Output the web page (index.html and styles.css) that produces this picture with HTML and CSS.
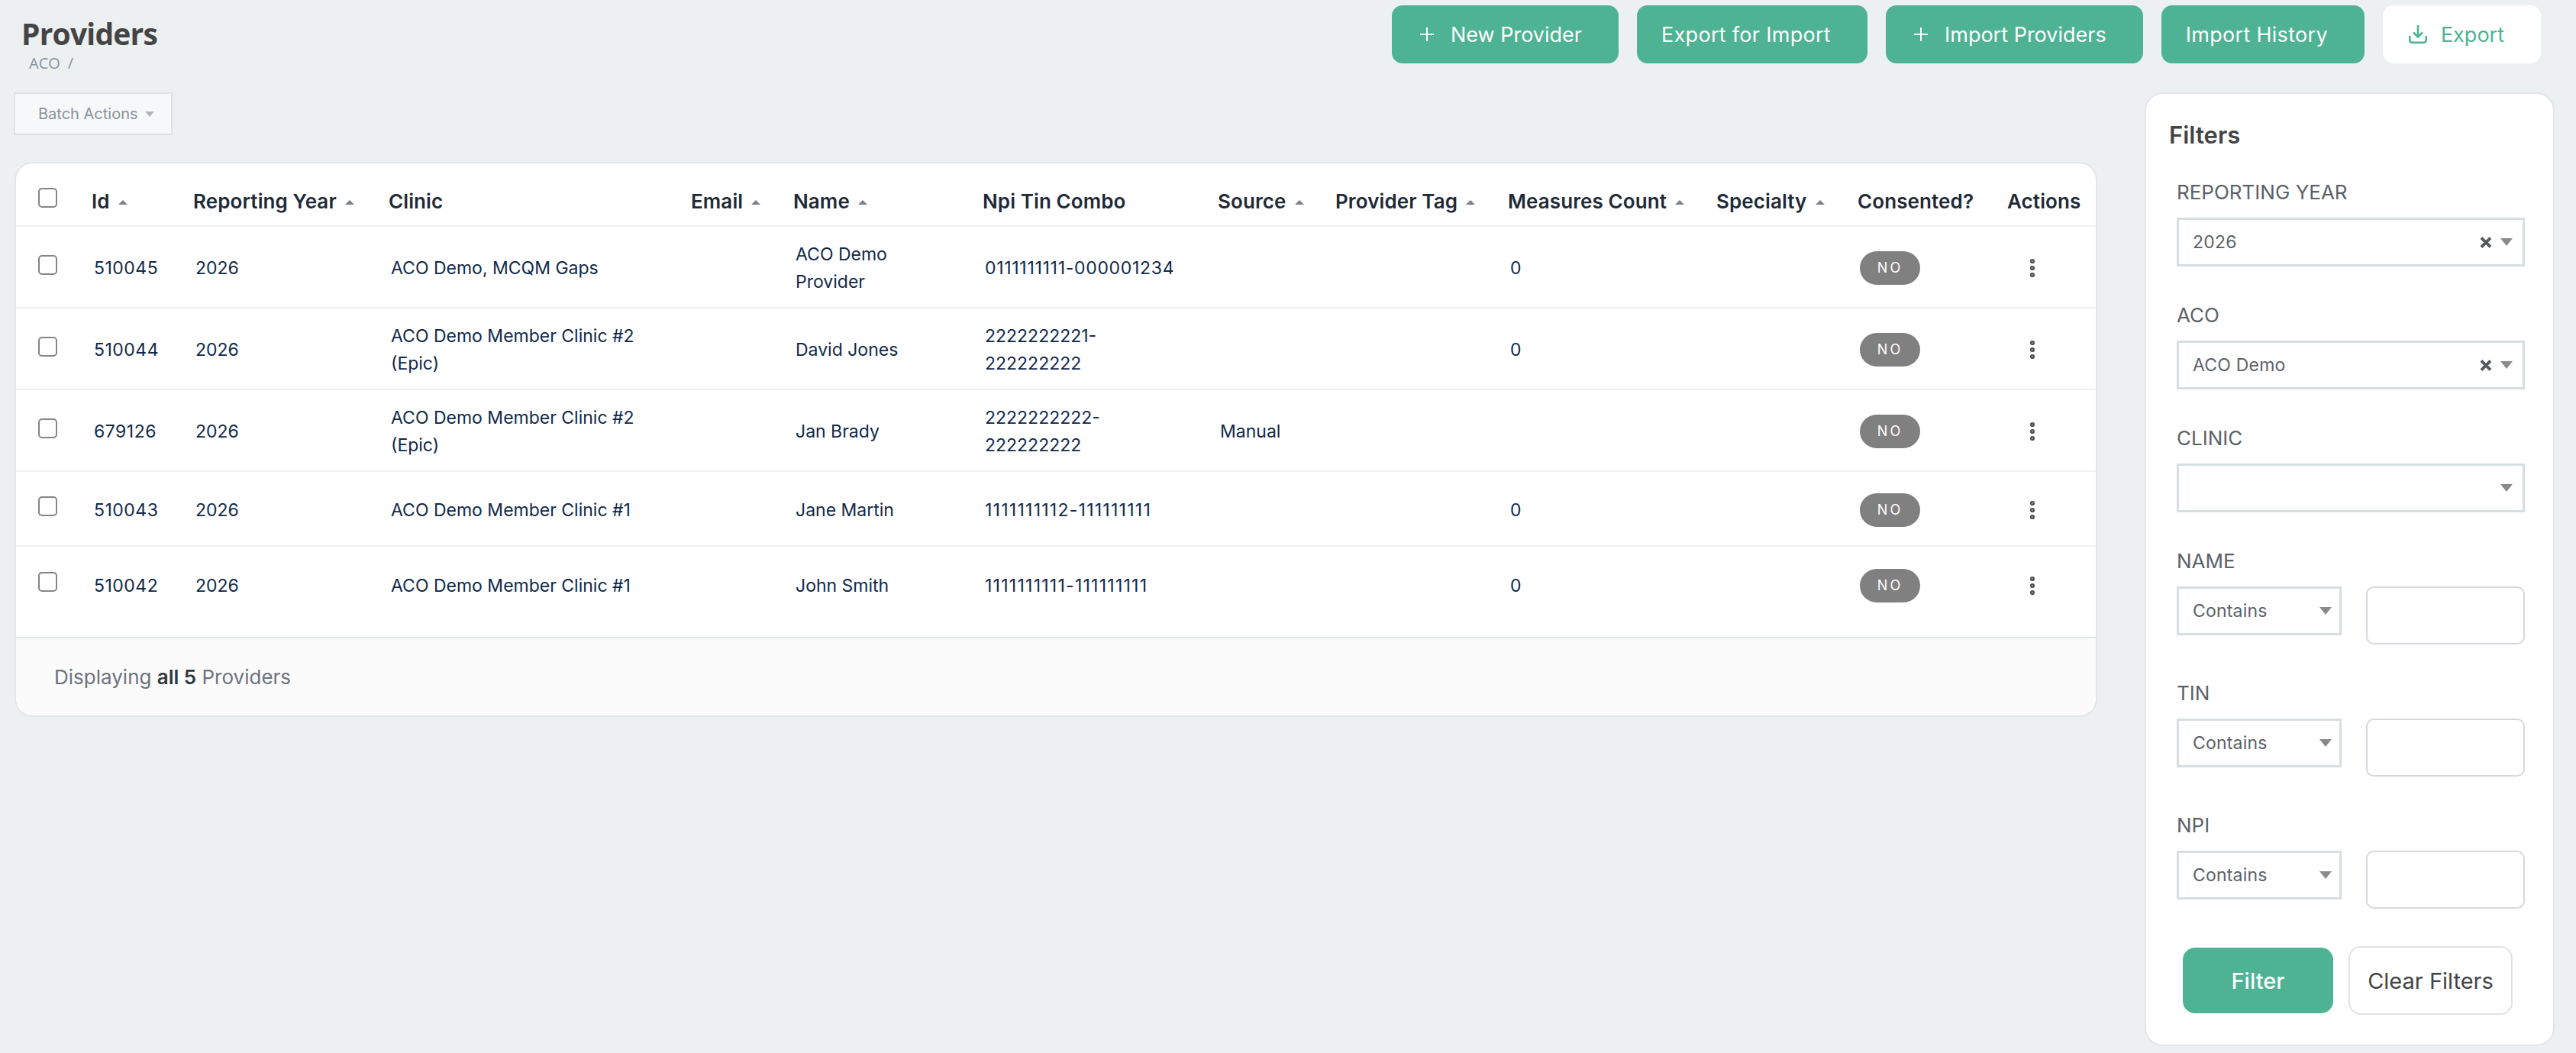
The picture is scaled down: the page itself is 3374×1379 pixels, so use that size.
FILE: index.html
```html
<!DOCTYPE html>
<html lang="en">
<head>
  <meta charset="UTF-8" />
  <title>Providers</title>
  <link rel="stylesheet" href="styles.css">
</head>
<body>

  <div class="topbar">
    <div class="page-title">
      <h1>Providers</h1>
      <div class="breadcrumb"><span>ACO</span><span class="slash">/</span></div>
    </div>
    <div class="top-actions">
      <a class="btn btn-green" href="#">
        <svg class="btn-icon" width="18" height="18" viewBox="0 0 18 18"><path d="M9 0v18M0 9h18" fill="none" stroke="currentColor" stroke-width="2"/></svg>
        New Provider
      </a>
      <a class="btn btn-green btn-plain" href="#">Export for Import</a>
      <a class="btn btn-green" href="#">
        <svg class="btn-icon" width="18" height="18" viewBox="0 0 18 18"><path d="M9 0v18M0 9h18" fill="none" stroke="currentColor" stroke-width="2"/></svg>
        Import Providers
      </a>
      <a class="btn btn-green btn-plain" href="#">Import History</a>
      <a class="btn btn-white" href="#">
        <svg class="btn-icon export-icon" width="24" height="24" viewBox="0 0 24 24" fill="none" stroke="currentColor" stroke-width="2.6"><path d="M12 0v15M6 9.5l6 6 6-6"/><path d="M1.3 14v5.7a3 3 0 0 0 3 3h15.4a3 3 0 0 0 3-3V14"/></svg>
        Export
      </a>
    </div>
  </div>

  <div class="content">
    <div class="main-col">
      <button class="batch-btn">Batch Actions<span class="batch-caret"></span></button>

      <div class="table-card">
        <table class="providers">
          <colgroup>
            <col class="c-check"><col class="c-id"><col class="c-year"><col class="c-clinic"><col class="c-email"><col class="c-name"><col class="c-npi"><col class="c-source"><col class="c-tag"><col class="c-measures"><col class="c-specialty"><col class="c-consent"><col class="c-actions">
          </colgroup>
          <thead>
            <tr>
              <th class="check"><span class="checkbox"></span></th>
              <th class="sort">Id</th>
              <th class="sort">Reporting Year</th>
              <th>Clinic</th>
              <th class="sort">Email</th>
              <th class="sort">Name</th>
              <th>Npi Tin Combo</th>
              <th class="sort">Source</th>
              <th class="sort">Provider Tag</th>
              <th class="sort">Measures Count</th>
              <th class="sort">Specialty</th>
              <th>Consented?</th>
              <th>Actions</th>
            </tr>
          </thead>
          <tbody>
            <tr class="tall">
              <td class="check"><span class="checkbox"></span></td>
              <td class="id">510045</td>
              <td>2026</td>
              <td>ACO Demo, MCQM Gaps</td>
              <td></td>
              <td>ACO Demo<br>Provider</td>
              <td class="some-ones">0111111111-000001234</td>
              <td></td>
              <td></td>
              <td>0</td>
              <td></td>
              <td><span class="badge">NO</span></td>
              <td class="more"><svg width="8" height="26" viewBox="0 0 8 26"><circle cx="4" cy="4" r="2.2"/><circle cx="4" cy="13" r="2.2"/><circle cx="4" cy="22" r="2.2"/></svg></td>
            </tr>
            <tr class="tall">
              <td class="check"><span class="checkbox"></span></td>
              <td class="id">510044</td>
              <td>2026</td>
              <td>ACO Demo Member Clinic #2<br>(Epic)</td>
              <td></td>
              <td>David Jones</td>
              <td>2222222221-<br>222222222</td>
              <td></td>
              <td></td>
              <td>0</td>
              <td></td>
              <td><span class="badge">NO</span></td>
              <td class="more"><svg width="8" height="26" viewBox="0 0 8 26"><circle cx="4" cy="4" r="2.2"/><circle cx="4" cy="13" r="2.2"/><circle cx="4" cy="22" r="2.2"/></svg></td>
            </tr>
            <tr class="tall">
              <td class="check"><span class="checkbox"></span></td>
              <td class="id">679126</td>
              <td>2026</td>
              <td>ACO Demo Member Clinic #2<br>(Epic)</td>
              <td></td>
              <td>Jan Brady</td>
              <td>2222222222-<br>222222222</td>
              <td>Manual</td>
              <td></td>
              <td></td>
              <td></td>
              <td><span class="badge">NO</span></td>
              <td class="more"><svg width="8" height="26" viewBox="0 0 8 26"><circle cx="4" cy="4" r="2.2"/><circle cx="4" cy="13" r="2.2"/><circle cx="4" cy="22" r="2.2"/></svg></td>
            </tr>
            <tr class="short">
              <td class="check"><span class="checkbox"></span></td>
              <td class="id">510043</td>
              <td>2026</td>
              <td>ACO Demo Member Clinic #1</td>
              <td></td>
              <td>Jane Martin</td>
              <td class="all-ones">1111111112-111111111</td>
              <td></td>
              <td></td>
              <td>0</td>
              <td></td>
              <td><span class="badge">NO</span></td>
              <td class="more"><svg width="8" height="26" viewBox="0 0 8 26"><circle cx="4" cy="4" r="2.2"/><circle cx="4" cy="13" r="2.2"/><circle cx="4" cy="22" r="2.2"/></svg></td>
            </tr>
            <tr class="short">
              <td class="check"><span class="checkbox"></span></td>
              <td class="id">510042</td>
              <td>2026</td>
              <td>ACO Demo Member Clinic #1</td>
              <td></td>
              <td>John Smith</td>
              <td class="all-ones">1111111111-111111111</td>
              <td></td>
              <td></td>
              <td>0</td>
              <td></td>
              <td><span class="badge">NO</span></td>
              <td class="more"><svg width="8" height="26" viewBox="0 0 8 26"><circle cx="4" cy="4" r="2.2"/><circle cx="4" cy="13" r="2.2"/><circle cx="4" cy="22" r="2.2"/></svg></td>
            </tr>
          </tbody>
        </table>
        <div class="table-footer">Displaying <b>all 5</b> Providers</div>
      </div>
    </div>

    <aside class="filters">
      <h3>Filters</h3>

      <div class="field">
        <label>REPORTING YEAR</label>
        <div class="select"><span class="value">2026</span><span class="clear"></span><span class="caret"></span></div>
      </div>
      <div class="field">
        <label>ACO</label>
        <div class="select"><span class="value">ACO Demo</span><span class="clear"></span><span class="caret"></span></div>
      </div>
      <div class="field">
        <label>CLINIC</label>
        <div class="select"><span class="value"></span><span class="caret"></span></div>
      </div>

      <div class="field">
        <label>NAME</label>
        <div class="op-row">
          <div class="select op"><span class="value">Contains</span><span class="caret"></span></div>
          <input type="text">
        </div>
      </div>
      <div class="field">
        <label>TIN</label>
        <div class="op-row">
          <div class="select op"><span class="value">Contains</span><span class="caret"></span></div>
          <input type="text">
        </div>
      </div>
      <div class="field">
        <label>NPI</label>
        <div class="op-row">
          <div class="select op"><span class="value">Contains</span><span class="caret"></span></div>
          <input type="text">
        </div>
      </div>

      <div class="filter-buttons">
        <button class="filter-btn">Filter</button>
        <button class="clear-btn">Clear Filters</button>
      </div>
    </aside>
  </div>

</body>
</html>
```

FILE: styles.css
```css
* {
  margin: 0;
  padding: 0;
  box-sizing: border-box;
}

body {
  background-color: #ecf0f1;
  font-family: 'Inter', sans-serif;
  padding: 7px 28px 9px 18px;
}

/* top bar */
.topbar {
  display: flex;
  justify-content: space-between;
  align-items: flex-start;
  height: 114px;
  padding-right: 18px;
}
.page-title {
  padding: 13px 0 0 10px;
}
.page-title h1 {
  font-family: 'Open Sans', sans-serif;
  font-size: 39px;
  font-weight: 700;
  line-height: 48px;
  letter-spacing: -0.8px;
  color: #444444;
}
.breadcrumb {
  display: flex;
  gap: 10px;
  margin-top: 3px;
  padding-left: 10px;
  font-family: 'Open Sans', sans-serif;
  font-size: 20px;
  line-height: 24px;
  color: #8a93a0;
}
.top-actions {
  display: flex;
  gap: 24px;
}
.btn {
  display: flex;
  align-items: center;
  height: 76px;
  padding: 0 48px 0 32px;
  border-radius: 14px;
  font-size: 27px;
  text-decoration: none;
}
.btn-plain {
  letter-spacing: 0.3px;
}
.btn-green {
  background-color: #4db393;
  color: #ffffff;
}
.btn-white {
  background-color: #ffffff;
  color: #4db393;
}
.btn-icon {
  margin: 0 22px 0 5px;
}
.export-icon {
  margin: 0 18px 0 2px;
}

/* main layout */
.content {
  display: flex;
  align-items: flex-start;
  gap: 62px;
}
.main-col {
  flex: 1;
  min-width: 0;
}

.batch-btn {
  display: flex;
  align-items: center;
  width: 208px;
  height: 56px;
  padding-left: 30px;
  background-color: #f6f8fa;
  border: 2px solid #dfe3e6;
  font-family: inherit;
  font-size: 20px;
  color: #8b9198;
}
.batch-caret {
  margin-left: 9px;
  border-top: 7px solid #b2b4b6;
  border-left: 6px solid transparent;
  border-right: 6px solid transparent;
}

/* table */
.table-card {
  margin: 35px 0 0 1px;
  background-color: #ffffff;
  border: 2px solid #e3e6e8;
  border-radius: 24px;
  overflow: hidden;
}
.providers {
  width: 2725px;
  table-layout: fixed;
  border-collapse: separate;
  border-spacing: 0;
  margin-bottom: 20px;
}
.c-check { width: 87px; }
.c-id { width: 133px; }
.c-year { width: 256px; }
.c-clinic { width: 396px; }
.c-email { width: 134px; }
.c-name { width: 248px; }
.c-npi { width: 308px; }
.c-source { width: 154px; }
.c-tag { width: 226px; }
.c-measures { width: 273px; }
.c-specialty { width: 185px; }
.c-consent { width: 196px; }
.c-actions { width: 129px; }

.providers th {
  height: 83px;
  padding: 18px 0 0 12px;
  border-bottom: 2px solid #f0f1f2;
  text-align: left;
  font-size: 26px;
  font-weight: 600;
  letter-spacing: 0.1px;
  color: #1f2a37;
  white-space: nowrap;
}
.providers th.sort::after {
  content: "";
  display: inline-block;
  margin-left: 11px;
  vertical-align: 5px;
  border-bottom: 6px solid #7b8287;
  border-left: 6px solid transparent;
  border-right: 6px solid transparent;
}
.providers td {
  padding: 3px 0 0 15px;
  border-bottom: 2px solid #f0f1f2;
  font-size: 23px;
  line-height: 36px;
  color: #10294a;
  vertical-align: middle;
}
.providers tr.tall td { height: 107px; }
.providers tr.short td { height: 98px; }
.providers tbody tr:last-child td { border-bottom: none; }

/* the ones are wider in the original's digit set */
.providers td.id { letter-spacing: 0.5px; }
.providers td.all-ones { letter-spacing: 1.25px; }
.providers td.some-ones { letter-spacing: 0.7px; }

.providers th.check {
  padding: 8px 0 0 29px;
}
.providers td.check {
  padding: 0 0 6px 29px;
}
.checkbox {
  display: block;
  width: 25px;
  height: 26px;
  background-color: #ffffff;
  border: 2px solid #858585;
  border-radius: 5px;
}
.badge {
  display: inline-block;
  width: 79px;
  height: 44px;
  background-color: #808080;
  border-radius: 22px;
  color: #ffffff;
  font-size: 18px;
  line-height: 44px;
  letter-spacing: 3px;
  text-align: center;
}
.providers td.more {
  padding-left: 41px;
  line-height: 0;
}
.more circle {
  fill: #8a8a8a;
  stroke: #505050;
  stroke-width: 1.8;
}

.table-footer {
  height: 103px;
  padding-left: 50px;
  border-top: 2px solid #e3e6e8;
  background-color: #fbfbfb;
  font-size: 26px;
  line-height: 101px;
  color: #6c7280;
}
.table-footer b {
  font-weight: 600;
  color: #2f3640;
}

/* filters */
.filters {
  flex: none;
  width: 537px;
  height: 1249px;
  padding: 34px 30px 0;
  background-color: #ffffff;
  border: 2px solid #e3e6e8;
  border-radius: 24px;
}
.filters h3 {
  font-size: 31px;
  font-weight: 600;
  line-height: 40px;
  color: #444444;
  margin-bottom: 36px;
}
.field {
  margin: 0 7px 45px 10px;
}
.field label {
  display: block;
  height: 38px;
  margin-bottom: 14px;
  font-size: 26px;
  line-height: 38px;
  color: #5c6168;
}
.select {
  display: flex;
  align-items: center;
  height: 64px;
  padding: 0 13px 0 18px;
  background-color: #ffffff;
  border: 3px solid #d8dde1;
  font-size: 23px;
  color: #5c6168;
}
.select .value {
  flex: 1;
  letter-spacing: 0.2px;
}
.clear {
  position: relative;
  width: 13px;
  height: 13px;
  margin-right: 13px;
}
.clear::before,
.clear::after {
  content: "";
  position: absolute;
  left: 5px;
  top: -2px;
  width: 3.5px;
  height: 17px;
  background-color: #55595e;
  transform: rotate(45deg);
}
.clear::after {
  transform: rotate(-45deg);
}
.caret {
  border-top: 10px solid #8a8a8a;
  border-left: 8px solid transparent;
  border-right: 8px solid transparent;
}
.op-row {
  display: flex;
  align-items: flex-start;
  justify-content: space-between;
}
.select.op {
  width: 216px;
  padding-right: 10px;
}
.op-row input {
  width: 208px;
  height: 76px;
  border: 2px solid #d5d8de;
  border-radius: 10px;
  outline: none;
  background-color: #ffffff;
}

.filter-buttons {
  display: flex;
  align-items: center;
  gap: 20px;
  margin: 49px 0 0 18px;
}
.filter-btn {
  width: 197px;
  height: 86px;
  border: none;
  border-radius: 16px;
  background-color: #4db393;
  color: #ffffff;
  font-family: inherit;
  font-size: 29px;
  font-weight: 500;
}
.clear-btn {
  width: 215px;
  height: 90px;
  border: 2px solid #e0e2e4;
  border-radius: 16px;
  background-color: #ffffff;
  color: #444444;
  font-family: inherit;
  font-size: 29px;
}
```
